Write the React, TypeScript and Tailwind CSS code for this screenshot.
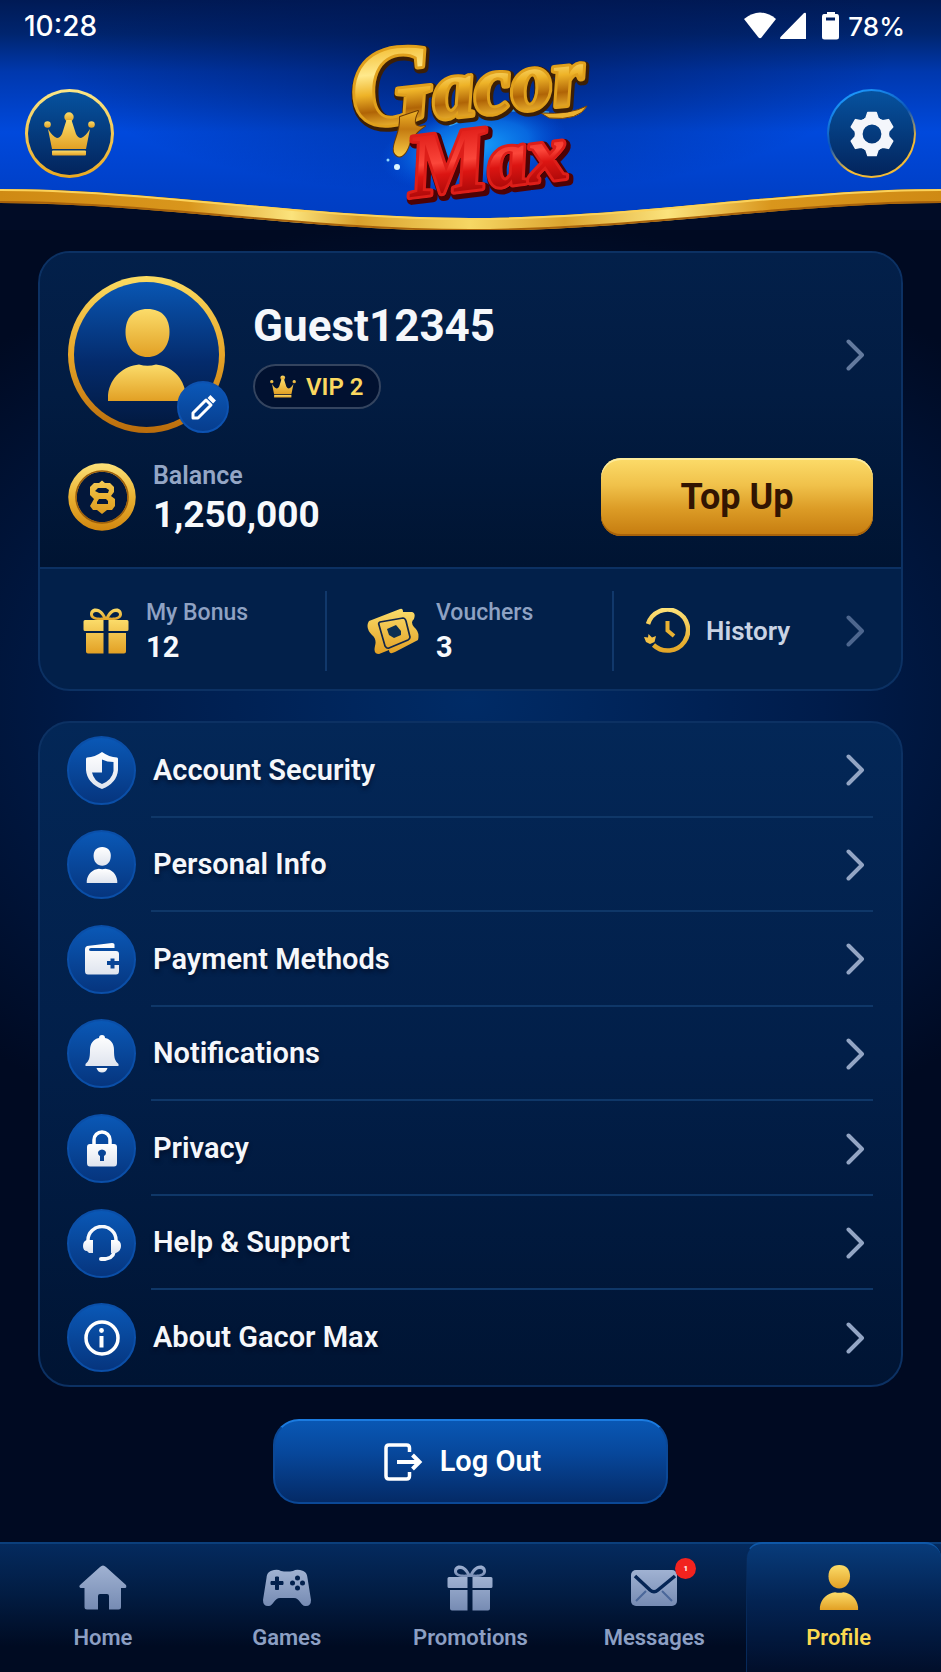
import type { ReactNode } from "react";
import clsx from "clsx";

type IconProps = { className?: string };

// Shared gradients, referenced by every icon on the page
function Gradients() {
  return (
    <defs>
      <linearGradient id="gold" x1="0" y1="0" x2="0" y2="1">
        <stop offset="0" stopColor="#fbdc6a" />
        <stop offset="1" stopColor="#e2a024" />
      </linearGradient>
      <linearGradient id="goldDeep" gradientUnits="userSpaceOnUse" x1="0" y1="0" x2="0" y2="68">
        <stop offset="0" stopColor="#fde27a" />
        <stop offset="0.5" stopColor="#e9b132" />
        <stop offset="1" stopColor="#d0860f" />
      </linearGradient>
      <linearGradient id="silver" x1="0" y1="0" x2="0" y2="1">
        <stop offset="0" stopColor="#a0b2d2" />
        <stop offset="1" stopColor="#768bb3" />
      </linearGradient>
      <linearGradient id="white" x1="0" y1="0" x2="0" y2="1">
        <stop offset="0" stopColor="#ffffff" />
        <stop offset="1" stopColor="#dfe4ee" />
      </linearGradient>
      <linearGradient id="ribbon" x1="0" y1="0" x2="1" y2="0">
        <stop offset="0" stopColor="#cf8a14" />
        <stop offset="0.2" stopColor="#d9961c" />
        <stop offset="0.31" stopColor="#fbe37c" />
        <stop offset="0.38" stopColor="#d9a02c" />
        <stop offset="0.5" stopColor="#f6d764" />
        <stop offset="0.6" stopColor="#dca42f" />
        <stop offset="0.71" stopColor="#fbe37c" />
        <stop offset="0.82" stopColor="#d9961c" />
        <stop offset="1" stopColor="#cf8a14" />
      </linearGradient>
      <linearGradient id="logoGold" x1="0" y1="0" x2="0" y2="1">
        <stop offset="0.15" stopColor="#f2b92a" />
        <stop offset="0.4" stopColor="#ffe98c" />
        <stop offset="0.56" stopColor="#eeb328" />
        <stop offset="0.7" stopColor="#b06406" />
        <stop offset="0.85" stopColor="#f3bd34" />
      </linearGradient>
      <linearGradient id="logoTail" x1="0" y1="0" x2="0" y2="1">
        <stop offset="0" stopColor="#eeb328" />
        <stop offset="0.4" stopColor="#c47a10" />
        <stop offset="1" stopColor="#f7c944" />
      </linearGradient>
      <linearGradient id="logoRed" x1="0" y1="0" x2="0" y2="1">
        <stop offset="0.2" stopColor="#e2201b" />
        <stop offset="0.5" stopColor="#fb463a" />
        <stop offset="0.62" stopColor="#dc1512" />
        <stop offset="0.85" stopColor="#a80808" />
      </linearGradient>
      <radialGradient id="logoGlow">
        <stop offset="0" stopColor="#19a8ff" />
        <stop offset="0.6" stopColor="#0a7bf0" stopOpacity="0.7" />
        <stop offset="1" stopColor="#0050e0" stopOpacity="0" />
      </radialGradient>
    </defs>
  );
}

function Wave() {
  return (
    <svg viewBox="0 0 941 50" preserveAspectRatio="none" className="block h-[50px] w-full" aria-hidden="true">
      <Gradients />
      <path d="M0 9C150 9 310 38 470 38S791 9 941 9V50H0Z" fill="#010c26" />
      <path d="M0 9C150 9 310 38 470 38S791 9 941 9V23C791 23 630 51 470 51S150 23 0 23Z" fill="url(#ribbon)" />
      <path d="M0 10C150 10 310 39 470 39S791 10 941 10" fill="none" stroke="#fbd25a" strokeWidth="2" />
      <path d="M0 22C150 22 310 50 470 50S791 22 941 22" fill="none" stroke="#a8620a" strokeWidth="2" />
    </svg>
  );
}

function Logo() {
  return (
    <svg viewBox="0 0 260 180" className="h-[180px] w-[260px] overflow-visible" role="img" aria-label="Gacor Max">
      <ellipse cx="132" cy="114" rx="94" ry="42" fill="url(#logoGlow)" transform="rotate(-10 132 114)" />
      <path d="M108 92Q160 70 208 80" fill="none" stroke="#43c1ff" strokeWidth="3" opacity="0.7" />
      <circle cx="56" cy="134" r="3" fill="#d9f4ff" />
      <circle cx="47" cy="127" r="1.500" fill="#8fd8ff" />
      <path d="M200 80Q228 82 246 73Q238 88 208 85Z" fill="#eab02e" stroke="#7a4303" />
      <g fontFamily="'Liberation Serif', serif" fontWeight="700" fontStyle="italic" paintOrder="stroke" strokeLinejoin="round">
        <g transform="rotate(-6 17 96)">
          <text x="15" y="96" stroke="#3c1f06" strokeWidth="10">
            <tspan fontSize="112">G</tspan>
            <tspan fontSize="83">acor</tspan>
          </text>
          <text x="14" y="94" fill="url(#logoGold)" stroke="#e0a01c" strokeWidth="6">
            <tspan fontSize="112">G</tspan>
            <tspan fontSize="83">acor</tspan>
          </text>
        </g>
        <path
          d="M59 84L77 78C72 88 72 96 84 93C76 98 71 104 68 112C64 124 57 127 53 119C51 110 60 100 59 84Z"
          fill="url(#logoTail)"
          stroke="#6b3b04"
          strokeWidth="2"
        />
        <g transform="rotate(-7 70 166)">
          <text x="72" y="167" stroke="#4d0205" strokeWidth="10">
            <tspan fontSize="90">M</tspan>
            <tspan fontSize="80">ax</tspan>
          </text>
          <text x="70" y="164" fill="url(#logoRed)" stroke="#dd1e19" strokeWidth="6">
            <tspan fontSize="90">M</tspan>
            <tspan fontSize="80">ax</tspan>
          </text>
        </g>
      </g>
    </svg>
  );
}

function CrownIcon({ className }: IconProps) {
  return (
    <svg viewBox="0 0 51 44" className={className} fill="url(#gold)" aria-hidden="true">
      <circle cx="25" cy="5" r="4.7" />
      <circle cx="3.5" cy="12.5" r="3.3" />
      <circle cx="47.5" cy="12.5" r="3.3" />
      <path d="M4 17Q9 25 13 26Q16 26 18 22L22.500 8H27.500L32 22Q34 26 37 26Q41 25 46 17L42 37H8Z" />
      <rect x="8" y="38.500" width="34" height="5" rx="1" />
    </svg>
  );
}

function GearIcon({ className }: IconProps) {
  return (
    <svg viewBox="-23 -23 46 46" className={className} fill="#f4f6fb" aria-hidden="true">
      <circle r="13.200" fill="none" stroke="#f4f6fb" strokeWidth="7.600" />
      {[0, 60, 120, 180, 240, 300].map((deg) => (
        <path
          key={deg}
          transform={`rotate(${deg})`}
          d="M-4.200 -21.500H4.200L6 -16Q8 -14 10 -13L6 -11H-6L-10 -13Q-8 -14 -6 -16Z"
          stroke="#f4f6fb"
          strokeWidth="1.500"
          strokeLinejoin="round"
        />
      ))}
    </svg>
  );
}

function PersonIcon({ className, fill = "url(#gold)" }: IconProps & { fill?: string }) {
  return (
    <svg viewBox="0 0 78 92" className={className} fill={fill} aria-hidden="true">
      <path d="M39.500 0C54 0 61.500 9 61.500 23C61.500 38 52 48 39.500 48S17.500 38 17.500 23C17.500 9 25 0 39.500 0Z" />
      <path d="M0 92V86C2 68 16 57 31 55.500Q39.500 58 48 55.500C63 57 76 68 78 86V92Z" />
    </svg>
  );
}

function PencilIcon({ className }: IconProps) {
  return (
    <svg viewBox="0 0 25 25" className={className} fill="none" stroke="#fff" aria-hidden="true">
      <path d="M2 23V18L15 5L20 10L7 23Z" strokeWidth="3" strokeLinejoin="round" />
      <path d="M18 1.500L23.500 7" strokeWidth="4" />
    </svg>
  );
}

function CoinIcon({ className }: IconProps) {
  return (
    <svg viewBox="0 0 68 68" className={className} aria-hidden="true">
      <circle cx="34" cy="34" r="29.500" fill="#03173a" stroke="url(#goldDeep)" strokeWidth="8.500" />
      <circle cx="34" cy="34" r="26" fill="none" stroke="#9a5d0b" strokeWidth="1.500" />
      <path
        fillRule="evenodd"
        fill="url(#goldDeep)"
        d="M34 17.500L37 20H42L46 24V29L43 33L47 36V43L44 47H39L34 51L29 47H25L22 43L26 36L22 32V24L26 20H31ZM30 25L27 28L31 30H40L41 27L38 25ZM31 36L29 39V41H40V38L38 36Z"
      />
    </svg>
  );
}

function GiftIcon({ className, fill = "url(#gold)" }: IconProps & { fill?: string }) {
  return (
    <svg viewBox="0 0 46 46" className={className} fill={fill} aria-hidden="true">
      <path
        fillRule="evenodd"
        d="M20 12C12 13 7 10 7 6.500C7 3 9 0.500 12.500 0.500C18 0.500 21 5 23 9C25 5 28 0.500 33.500 0.500C37 0.500 39 3 39 6.500C39 10 34 13 26 12ZM20 9.500C18 6 16 4 13 4C11 4 10 5 10 6.500C10 9 14 10 20 9.500ZM26 9.500C32 10 36 9 36 6.500C36 5 35 4 33 4C30 4 28 6 26 9.500Z"
      />
      <path d="M2 12H20.500V23H2Q0.500 23 0.500 21.500V13.500Q0.500 12 2 12ZM25.500 12H44Q45.500 12 45.500 13.500V21.500Q45.500 23 44 23H25.500ZM3 25H20.500V45.500H5Q3 45.500 3 43.500ZM25.500 25H43V43.500Q43 45.500 41 45.500H25.500Z" />
    </svg>
  );
}

function TicketIcon({ className }: IconProps) {
  return (
    <svg viewBox="0 0 52 46" className={className} aria-hidden="true">
      <path d="M2 13L33 1Q36 0 36 4L45 4Q49 5 47 11Q43 14 47 19Q53 24 51 32L28 44Q22 47 22 42L12 46Q6 46 8 38Q10 31 5 27Q-1 21 1 15Z" fill="url(#gold)" />
      <path d="M12 17Q11 15 13 14L36 10Q38 10 39 13L43 29Q43 31 41 32L22 40Q20 41 18 38L12 17Z" fill="none" stroke="#12264a" strokeWidth="1.700" />
      <path d="M20 21L29 17L34 23V27L27 30L22 27Z" fill="#0d2f52" />
    </svg>
  );
}

function HistoryIcon({ className }: IconProps) {
  return (
    <svg viewBox="0 0 46 46" className={className} fill="none" aria-hidden="true">
      <path d="M4 16A20.500 20.500 0 1 1 9.500 37" stroke="url(#goldDeep)" strokeWidth="4.500" />
      <path d="M23.500 13V22.500L30 28" stroke="#e9b132" strokeWidth="4" />
      <path d="M0 29L4 29.500L4.500 26L8 29.500L12 28L10.500 34L6 36L2 34Z" fill="#f3c045" />
    </svg>
  );
}

function Chevron({ className }: IconProps) {
  return (
    <svg viewBox="0 0 19 32" className={clsx("h-8 w-[19px] shrink-0", className)} fill="none" aria-hidden="true">
      <path d="M2.500 2.500L16 16L2.500 29.500" stroke="currentColor" strokeWidth="4" strokeLinecap="round" strokeLinejoin="round" />
    </svg>
  );
}

const ShieldIcon = () => (
  <svg viewBox="0 0 32 37" className="h-[37px] w-8" fill="url(#white)" aria-hidden="true">
    <path
      fillRule="evenodd"
      d="M16 0Q23 5 31 5.500Q32 5.500 32 7V18Q31 31 16 37Q1 31 0 18V7Q0 5.500 1 5.500Q9 5 16 0ZM16 7.500Q21 10 27.500 10V19Q26 28 16 32Q8 29 6 20.500H16Z"
    />
  </svg>
);

const WalletIcon = () => (
  <svg viewBox="0 0 34 32" className="h-8 w-[34px]" fill="url(#white)" aria-hidden="true">
    <path
      fillRule="evenodd"
      d="M2 3L27 0Q30 0 29.500 3V5H6Q4 5 4 6.500T6 8H31Q34 8 34 11V18H29.500V15.500H25.500V18H22V22H25.500V25.500H29.500V22H34V28Q34 31.500 31 31.500H3Q0 31.500 0 28V6Q0 4 2 3Z"
    />
  </svg>
);

const BellIcon = () => (
  <svg viewBox="0 0 34 38" className="h-[38px] w-[34px]" fill="url(#white)" aria-hidden="true">
    <path d="M17 0C19 0 20 1 20 3C26 4 29 9 29 15C29 23 30 26 33.500 29V31H0.500V29C4 26 5 23 5 15C5 9 8 4 14 3C14 1 15 0 17 0Z" />
    <path d="M11.500 33H22.500Q21 37.500 17 37.500T11.500 33Z" />
  </svg>
);

const LockIcon = () => (
  <svg viewBox="0 0 30 37" className="h-[37px] w-[30px]" aria-hidden="true">
    <path d="M7 17V10A8 8 0 0 1 23 10V17" fill="none" stroke="#fff" strokeWidth="3.500" />
    <path
      fill="url(#white)"
      fillRule="evenodd"
      d="M3 14H27Q30 14 30 17V33Q30 36.500 27 36.500H3Q0 36.500 0 33V17Q0 14 3 14ZM15 19.500Q11 20 11 23Q11 25 13 26V31H17V26Q19 25 19 23Q19 20 15 19.500Z"
    />
  </svg>
);

const HeadsetIcon = () => (
  <svg viewBox="0 0 38 37" className="h-[37px] w-[38px]" fill="none" stroke="#f7f9fc" aria-hidden="true">
    <path d="M5 17V15A14 13.500 0 0 1 33 15V17M31 27Q30 34 19 34" strokeWidth="3.500" />
    <path d="M18 34H22" strokeWidth="4" strokeLinecap="round" />
    <path d="M4 15H10V28H6L4 26Q0 26 0 21Q0 16 4 15ZM34 15H28V28H33Q38 26 38 21Q38 16 34 15Z" fill="url(#white)" stroke="none" />
  </svg>
);

const InfoIcon = () => (
  <svg viewBox="0 0 36 36" className="size-9" fill="#fff" aria-hidden="true">
    <circle cx="18" cy="18" r="16" fill="none" stroke="#fff" strokeWidth="3.500" />
    <circle cx="17.500" cy="10.500" r="2.400" />
    <path d="M15.500 16H19.500V27.500H15.500Z" />
  </svg>
);

const HomeIcon = () => (
  <svg viewBox="0 0 48 45" className="h-[45px] w-12" fill="url(#silver)" aria-hidden="true">
    <path d="M21 2Q24 -1 27 2L47 20Q48 23 46 23H42V42Q42 44.500 39.500 44.500H30V31Q30 29 28 29H21Q19 29 19 31V44.500H8Q5.500 44.500 5.500 42V23H1.500Q-0.500 22 1 20Z" />
  </svg>
);

const GamepadIcon = () => (
  <svg viewBox="0 0 48 38" className="h-[38px] w-12" aria-hidden="true">
    <path
      fill="url(#silver)"
      d="M11 1Q15 0 18 2Q24 3 30 2Q33 0 37 1C42 2 44 4 44.500 9L48 31Q48 37 43 37C38 38 37 29 31 29H17C11 29 10 38 5 37Q0 37 0 31L3.500 9C4 4 6 2 11 1Z"
    />
    <g fill="#02204d">
      <path d="M12.500 8H15.500V12.500H20V15.500H15.500V20.500H12.500V15.500H8V12.500H12.500Z" stroke="#02204d" strokeLinejoin="round" />
      <circle cx="34.500" cy="9" r="2.500" />
      <circle cx="34.500" cy="19" r="2.500" />
      <circle cx="29.500" cy="14" r="2.500" />
      <circle cx="39.500" cy="14" r="2.500" />
    </g>
  </svg>
);

const MailIcon = () => (
  <svg viewBox="0 0 48 36" className="h-9 w-12" aria-hidden="true">
    <rect x="1" width="46" height="36" rx="5" fill="url(#silver)" />
    <path d="M5 6L20 20Q24 23.500 28 20L45 6" fill="none" stroke="#052555" strokeWidth="3.500" />
    <path d="M6 31L16 21M42 31L32 21" fill="none" stroke="#4a679a" strokeWidth="2" />
  </svg>
);

const menu: { label: string; icon: ReactNode }[] = [
  { label: "Account Security", icon: <ShieldIcon /> },
  { label: "Personal Info", icon: <PersonIcon className="h-9 w-8" fill="url(#white)" /> },
  { label: "Payment Methods", icon: <WalletIcon /> },
  { label: "Notifications", icon: <BellIcon /> },
  { label: "Privacy", icon: <LockIcon /> },
  { label: "Help & Support", icon: <HeadsetIcon /> },
  { label: "About Gacor Max", icon: <InfoIcon /> },
];

const tabs: { label: string; icon: ReactNode; badge?: number; active?: boolean }[] = [
  { label: "Home", icon: <HomeIcon /> },
  { label: "Games", icon: <GamepadIcon /> },
  { label: "Promotions", icon: <GiftIcon className="size-[46px]" fill="url(#silver)" /> },
  { label: "Messages", icon: <MailIcon />, badge: 1 },
  { label: "Profile", icon: <PersonIcon className="h-[45px] w-10" />, active: true },
];

function StatusBar() {
  return (
    <div className="flex h-[52px] items-center justify-between pr-9 pl-6 font-['Inter',sans-serif] font-medium text-white">
      <time className="text-[28px]">10:28</time>
      <div className="flex items-center text-[26px]">
        <svg viewBox="0 0 96 30" className="mr-2 h-[30px] w-24" fill="#fff" aria-hidden="true">
          <path d="M0 8Q16 -5 32 8L17.500 26.500Q16 28 14.500 26.500Z" />
          <path d="M62 3V28H37Q35 27.500 37 25.500L60 2Q62 1 62 3Z" />
          <path fillRule="evenodd" d="M83 1H91V3H93Q95 3 95 6V26Q95 28.500 92.500 28.500H80.500Q78 28.500 78 26V6Q78 3 80 3H83ZM82 6.500V9.500H91V6.500Z" />
        </svg>
        <span>78%</span>
      </div>
    </div>
  );
}

function Header() {
  return (
    <header className="relative bg-[linear-gradient(180deg,#001a55_0,#00256f_34px,#0038ae_72px,#0049dc_132px,#0040c8_190px,#003cc0_230px)]">
      <div className="absolute inset-0 bg-[radial-gradient(ellipse_45%_65%_at_50%_20%,rgba(0,20,80,0.6),transparent)]" />
      <div className="relative">
        <StatusBar />
        <div className="flex h-32 items-start justify-between px-[25px] pt-[37px]">
          <button
            type="button"
            aria-label="VIP"
            className="flex size-[89px] items-center justify-center rounded-full border-3 border-transparent [background:linear-gradient(180deg,#06529f,#03245c)_padding-box,linear-gradient(180deg,#fbe788,#eba91f)_border-box]"
          >
            <CrownIcon className="h-11 w-[51px]" />
          </button>
          <button
            type="button"
            aria-label="Settings"
            className="flex size-[89px] items-center justify-center rounded-full border-2 border-transparent [background:linear-gradient(180deg,#06529f,#03245c)_padding-box,linear-gradient(155deg,#1d9bff_10%,#0b54b8_45%,#f3bb36_70%)_border-box]"
          >
            <GearIcon className="size-[46px]" />
          </button>
        </div>
        <Wave />
      </div>
      <h1 className="absolute top-[33px] left-1/2 -translate-x-1/2">
        <Logo />
      </h1>
    </header>
  );
}

function Stat({ label, value }: { label: string; value: string }) {
  return (
    <div>
      <div className="text-[23px] leading-8 font-medium text-[#8fa2c3]">{label}</div>
      <div className="text-[29px] leading-9 font-bold text-[#f7f9fc]">{value}</div>
    </div>
  );
}

function ProfileCard() {
  return (
    <section className="rounded-[32px] border-2 border-[#0c3163] bg-[#02204a]">
      <div className="rounded-t-[30px] border-b-2 border-[#0c3163] bg-[linear-gradient(180deg,#03204a,#021c42_45%,#001432)] px-7 pt-[23px] pb-[31px]">
        <div className="flex items-center">
          <div className="relative shrink-0">
            <div className="flex size-[157px] items-center justify-center rounded-full border-6 border-transparent [background:linear-gradient(180deg,#0956b3,#042b6c_55%,#02193f)_padding-box,linear-gradient(180deg,#fbdc62,#e7a528_50%,#b96c0c)_border-box]">
              <PersonIcon className="h-[92px] w-[78px]" />
            </div>
            <button
              type="button"
              aria-label="Edit avatar"
              className="absolute -right-1 bottom-0 flex size-[52px] items-center justify-center rounded-full border-2 border-[#0d52b0] bg-[linear-gradient(180deg,#0b58b8,#073d8d)]"
            >
              <PencilIcon className="size-[25px]" />
            </button>
          </div>
          <div className="ml-7 flex-1">
            <h2 className="mb-3 text-[44px] leading-[52px] font-bold text-[#f5f7fb]">Guest12345</h2>
            <div className="inline-flex h-[45px] items-center gap-[10px] rounded-full border-2 border-[#34445f] bg-[#011130] px-[15px] text-2xl font-semibold text-[#fbd860]">
              <CrownIcon className="h-[23px] w-[26px]" />
              VIP 2
            </div>
          </div>
          <a href="#profile" aria-label="View profile" className="px-2 text-[#637a9e]">
            <Chevron />
          </a>
        </div>

        <div className="mt-[25px] flex items-center">
          <CoinIcon className="size-[68px]" />
          <div className="ml-[17px] flex-1">
            <div className="text-[25px] leading-9 font-semibold text-[#94a6c5]">Balance</div>
            <div className="text-[37px] leading-[42px] font-bold text-[#f7f9fc]">1,250,000</div>
          </div>
          <button
            type="button"
            className="h-[78px] w-[272px] rounded-[20px] bg-[linear-gradient(180deg,#fcdc6a,#f0c14a_35%,#dc9c26_65%,#c57b0f)] text-[36px] font-bold text-[#321502] shadow-[inset_0_2px_0_#fdeb9c,inset_0_-2px_0_#a8620a]"
          >
            Top Up
          </button>
        </div>
      </div>

      <div className="grid grid-cols-3 divide-x-2 divide-[#11386b] pt-[22px] pb-[18px]">
        <a href="#bonus" className="flex h-20 items-center gap-[17px] pl-[43px]">
          <GiftIcon className="size-[46px] shrink-0" />
          <Stat label="My Bonus" value="12" />
        </a>
        <a href="#vouchers" className="flex h-20 items-center gap-[17px] pl-10">
          <TicketIcon className="h-[46px] w-[52px] shrink-0" />
          <Stat label="Vouchers" value="3" />
        </a>
        <a href="#history" className="flex h-20 items-center pr-9 pl-[30px]">
          <HistoryIcon className="size-[46px] shrink-0" />
          <span className="ml-4 flex-1 text-[26px] font-semibold text-[#c9d3e4]">History</span>
          <Chevron className="text-[#4d668e]" />
        </a>
      </div>
    </section>
  );
}

function Menu() {
  return (
    <ul className="mt-[30px] grid min-h-[666px] auto-rows-fr rounded-[32px] border-2 border-[#0c3163] bg-[linear-gradient(180deg,#032757,#021f49_50%,#001433)]">
      {menu.map(({ label, icon }, i) => (
        <li key={label} className="flex">
          <a href="#settings" className="flex flex-1 items-center pr-7 pl-[27px]">
            <span className="flex size-[69px] items-center justify-center rounded-full border-2 border-[#0b4fa8] bg-[linear-gradient(180deg,#0a58b6,#06357e)]">
              {icon}
            </span>
            <span
              className={clsx(
                "ml-[15px] flex flex-1 items-center justify-between self-stretch pr-2 pl-0.5",
                i < menu.length - 1 && "border-b-2 border-[#0f3768] pt-0.5"
              )}
            >
              <span className="text-[29px] font-semibold text-[#f5f7fb] [text-shadow:0_3px_4px_rgba(0,8,30,0.6)]">{label}</span>
              <Chevron className="text-[#93a5c4]" />
            </span>
          </a>
        </li>
      ))}
    </ul>
  );
}

function TabBar() {
  return (
    <nav className="mt-auto grid h-[130px] grid-cols-5 border-t-2 border-[#0b3f7c] bg-[linear-gradient(180deg,#042a5e,#021c42_40%,#000b22_80%)] px-[11px]">
      {tabs.map(({ label, icon, badge, active }) => (
        <a
          key={label}
          href="#tab"
          aria-current={active ? "page" : undefined}
          className={clsx(
            "flex flex-col items-center pt-[19px] text-[22px] leading-7 font-semibold",
            active
              ? "-mt-0.5 -mr-[11px] rounded-t-[16px] border-t-2 border-l border-t-[#0f58a8] border-l-[#06295a] bg-[linear-gradient(180deg,#083b7a,#032352_45%,#010e2a)] pr-[11px] text-[#fbd950]"
              : "text-[#8c9fc3]"
          )}
        >
          <span className="relative flex h-[49px] items-center">
            {icon}
            {badge && (
              <span className="absolute -top-[5px] -right-[18px] flex size-[21px] items-center justify-center rounded-full bg-[#f2231f] text-[8px] leading-none font-bold text-white">
                {badge}
              </span>
            )}
          </span>
          <span className="mt-3">{label}</span>
        </a>
      ))}
    </nav>
  );
}

export default function App() {
  return (
    <div className="flex min-h-screen flex-col bg-[#000a20] bg-[radial-gradient(ellipse_75%_480px_at_50%_700px,#002b66,#001c4b_50%,#000a22)] font-['Roboto',sans-serif]">
      <Header />
      <main className="flex flex-col px-[38px] pt-[21px]">
        <ProfileCard />
        <Menu />
        <button
          type="button"
          className="mx-auto mt-8 mb-[38px] flex h-[85px] w-[395px] items-center justify-center gap-[17px] rounded-[26px] border-2 border-[#0b4896] border-t-[#1b7be0] bg-[linear-gradient(180deg,#0957b4,#07479b_40%,#042a66)] pr-4 text-[29px] font-semibold text-white"
        >
          <svg viewBox="0 0 39 38" className="h-[38px] w-[39px]" fill="none" stroke="#fff" aria-hidden="true">
            <path d="M25.500 9V5Q25.500 2 22.500 2H5Q2 2 2 5V33Q2 36 5 36H22.500Q25.500 36 25.500 33V29" strokeWidth="3.500" />
            <path d="M13 19H35M28.500 12L35.500 19L28.500 26" strokeWidth="4" />
          </svg>
          Log Out
        </button>
      </main>
      <TabBar />
    </div>
  );
}
